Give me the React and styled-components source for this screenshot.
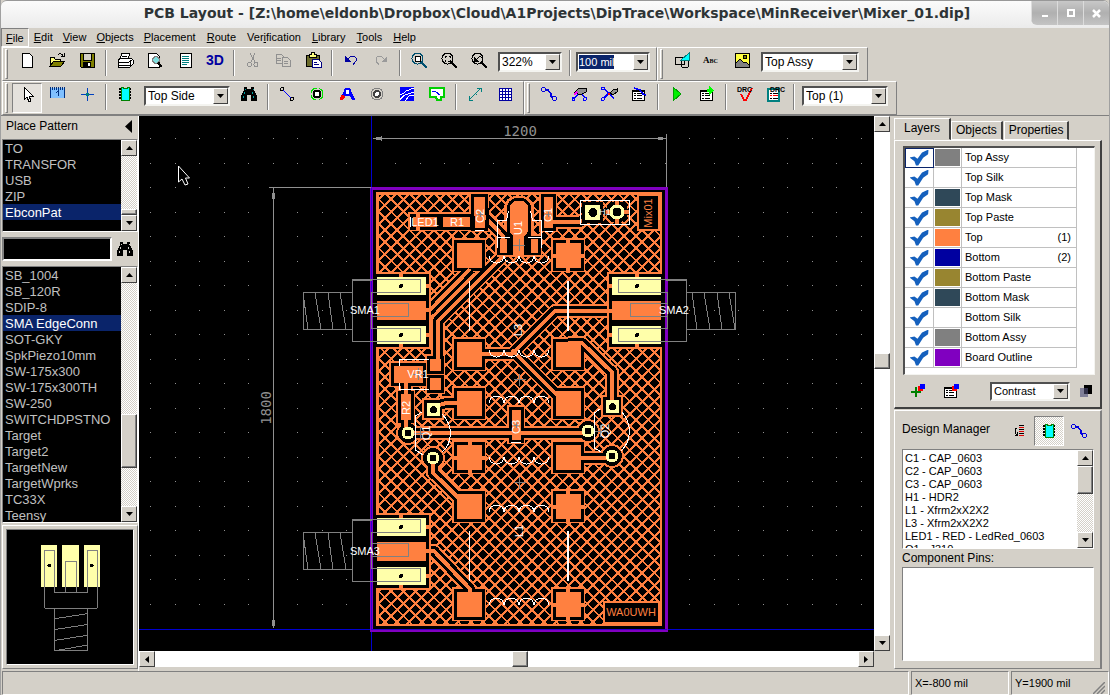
import React from "react";
import styled, { createGlobalStyle, css } from "styled-components";

const face = "#d4d0c8";
const copper = "#ff8040";
const pad = "#ffffaa";
const navy = "#0a246a";

const Global = createGlobalStyle`
  * { box-sizing: border-box; }
  body { margin: 0; background: ${face}; font: 11px/13px "Liberation Sans", Arial, sans-serif; color: #000; }
  button, input, select { font: inherit; color: inherit; margin: 0; padding: 0; border-radius: 0; }
  ul { list-style: none; margin: 0; padding: 0; }
`;

const raised = css`
  border: 1px solid; border-color: #fff #808080 #808080 #fff;
`;
const sunken = css`
  border: 1px solid; border-color: #808080 #fff #fff #808080;
`;

/* ---------- window frame ---------- */
const Window = styled.div`
  display: flex; flex-direction: column; height: 100vh; min-height: 600px;
  border-left: 1px solid #a0a0a0; border-right: 1px solid #a0a0a0; background: ${face};
`;
const TitleBar = styled.header`
  display: flex; height: 28px; flex: none; border-top: 1px solid #989898;
  border-radius: 6px 6px 0 0; background: linear-gradient(#fbfbfb, #ebebeb);
`;
const Title = styled.h1`
  flex: 1; margin: 0; padding-left: 82px; text-align: center; white-space: nowrap; overflow: hidden;
  font: bold 14px/25px "DejaVu Sans", sans-serif; color: #2e3436;
`;
const WindowButtons = styled.div`
  display: flex; height: 24px; border-radius: 0 6px 0 6px; overflow: hidden;
  background: linear-gradient(#c8c8c8, #b0b0b0 50%, #c4c4c4);
`;
const WindowButton = styled.button`
  width: 26px; border: 0; border-left: 1px solid #dcdcdc; background: none; display: grid; place-items: center;
`;
const MenuBar = styled.nav`
  display: flex; height: 19px; flex: none;
`;
const MenuItem = styled.button`
  height: 19px; padding: 0 4px; line-height: 17px; background: none;
  border: 1px solid ${face};
  &:nth-child(n + 5) { padding-right: 5px; }
  ${(p) => p.$open && css`border-color: #808080 #fff #fff #808080; line-height: 19px;`}
`;

/* ---------- tool bars ---------- */
const BarRow = styled.div`
  display: flex; height: 34px; flex: none; padding-left: 1px;
`;
const Band = styled.div`
  display: flex; ${raised} padding: 1px ${(p) => p.$end || 3}px 0 2px;
`;
const Grip = styled.span`
  width: 3px; height: 30px; ${raised} margin-right: 4px;
`;
const ToolButton = styled.button`
  width: 30px; height: 30px; padding: 2px 6px 10px; border: 1px solid transparent; background: none;
  ${(p) => p.$down && css`border-color: #808080 #fff #fff #808080; background: #e4e1dc;`}
  svg { display: block; }
`;
const Split = styled.span`
  width: 2px; height: 26px; margin: 1px 3px; flex: none; border-left: 1px solid #808080; border-right: 1px solid #fff;
`;
const ComboBox = styled.span`
  display: flex; width: ${(p) => p.$w}px; height: ${(p) => p.$h || 20}px; margin: ${(p) => p.$m || "3px 4px 0"};
  background: #fff; border: 2px solid; border-color: #505050 #f4f4f0 #f4f4f0 #505050;
  select, input { flex: 1; min-width: 0; border: 0; outline: 0; appearance: none; background: #fff; padding-left: 2px; font-size: ${(p) => p.$f || 12}px; }
`;
const Highlighted = styled.span`
  flex: 1; display: flex; padding: 1px;
  input { flex: none; width: 35px; padding: 0; background: ${navy}; color: #fff; }
`;
const DropArrow = styled.span`
  width: 15px; display: grid; place-items: center; background: ${face};
  border: 1px solid; border-color: #fff #404040 #404040 #fff;
`;

/* ---------- body ---------- */
const Body = styled.main`
  flex: 1; min-height: 0; display: flex; border-top: 1px solid #808080;
`;
const Left = styled.aside`
  width: 138px; flex: none; display: flex; flex-direction: column; border-right: 1px solid #fff; padding: 0 0 2px 1px;
`;
const PanelHead = styled.div`
  display: flex; align-items: center; justify-content: space-between; height: 23px; padding: 0 6px 3px 4px; font-size: 12px;
  button { border: 0; background: none; line-height: 0; }
`;
const ListFrame = styled.div`
  display: flex; ${sunken} background: ${(p) => (p.$dark ? "#000" : "#fff")};
  height: ${(p) => (p.$h ? p.$h + "px" : "auto")}; flex: ${(p) => (p.$h ? "none" : "1 1 0")}; min-height: 0;
`;
const PatternList = styled.ul`
  flex: 1; overflow: hidden; color: #c0c0c0; font-size: 13px; line-height: 16px;
`;
const Pattern = styled.li`
  height: 16px; padding: 1px 0 0 2px; white-space: nowrap;
  ${(p) => p.$on && css`background: ${navy}; color: #fff;`}
`;
const SearchRow = styled.div`
  display: flex; align-items: center; height: 34px; flex: none;
  input { width: 110px; height: 24px; background: #000; color: #fff; border: 2px solid; border-color: #808080 #fff #fff #808080; outline: 0; }
  button { flex: 1; border: 0; background: none; line-height: 0; }
`;
const Preview = styled.div`
  height: 144px; flex: none; margin-top: 2px; border: 1px solid #808080; border-left-color: #fff; border-top-color: #fff; padding: 3px;
  svg { display: block; width: 100%; height: 100%; background: #000; ${sunken} }
`;
const ScrollBar = styled.div`
  display: flex; flex: none; flex-direction: ${(p) => (p.$row ? "row" : "column")};
  ${(p) => (p.$row ? "height" : "width")}: 16px;
  background: ${(p) => (p.$plain ? "#fff" : `repeating-conic-gradient(#fff 0 25%, ${face} 0 50%) 0 0 / 2px 2px`)};
`;
const ScrollButton = styled.button`
  width: 16px; height: 16px; flex: none; background: ${face}; line-height: 0;
  border: 1px solid; border-color: #fff #404040 #404040 #fff; display: grid; place-items: center;
`;
const Thumb = styled.span`
  flex: 0 0 ${(p) => p.$size}px; background: ${face};
  border: 1px solid; border-color: #fff #404040 #404040 #fff; box-shadow: inset -1px -1px #808080;
`;
const Space = styled.span`
  flex: ${(p) => p.$part} 1 0;
`;
const CanvasArea = styled.section`
  flex: 1; min-width: 0; display: grid; grid-template: 1fr 17px / 1fr 19px; padding-bottom: 3px;
  > svg { display: block; width: 100%; height: 100%; background: #000; }
`;
const Right = styled.aside`
  width: 216px; flex: none; padding: 2px 7px 2px 1px; display: flex; flex-direction: column;
`;
const Tabs = styled.div`
  display: flex; align-items: flex-end; height: 22px; flex: none;
`;
const Tab = styled.button`
  height: ${(p) => (p.$on ? 22 : 19)}px; padding: 0 ${(p) => (p.$on ? 9 : 4)}px ${(p) => (p.$on ? 2 : 1)}px; font-size: 12px; background: ${face}; white-space: nowrap;
  border: 1px solid; border-color: #fff #404040 ${(p) => (p.$on ? face : "#fff")} #fff; border-right-width: 2px;
  margin-right: ${(p) => (p.$on ? 0 : 1)}px;
`;
const LayerPage = styled.section`
  height: 269px; flex: none; border: 1px solid; border-color: #fff #404040 #404040 #fff; border-width: 1px 2px 2px 1px;
  padding: 5px 5px 5px 8px; display: flex; flex-direction: column; justify-content: space-between;
`;
const LayerFrame = styled.div`
  height: 229px; background: #fff; border: 2px solid; border-color: #505050 #f4f4f0 #f4f4f0 #505050; border-width: 2px 1px 1px 2px;
`;
const LayerTable = styled.table`
  border-collapse: separate; border-spacing: 0; table-layout: fixed; width: 172px;
  td { height: 20px; padding: 0; border-right: 1px solid #c0c0c0; border-bottom: 1px solid #c0c0c0; vertical-align: middle; }
`;
const TickCell = styled.td`
  width: 29px; text-align: center; line-height: 0;
  ${(p) => p.$focus && css`outline: 1px solid ${navy}; outline-offset: -1px;`}
`;
const Tick = styled.input`
  appearance: none; width: 19px; height: 16px; vertical-align: middle; background: #1560bd;
  clip-path: polygon(0 50%, 26% 44%, 42% 58%, 66% 18%, 100% 0, 98% 30%, 72% 52%, 46% 100%, 34% 100%, 26% 74%);
`;
const SwatchCell = styled.td`
  width: 28px;
`;
const Swatch = styled.span`
  display: block; height: 17px; margin: 0 1px; background: ${(p) => p.$c};
`;
const NameCell = styled.td`
  div { display: flex; justify-content: space-between; padding: 0 5px 0 3px; }
`;
const LayerTools = styled.div`
  display: flex; align-items: center; height: 22px;
`;
const SmallTool = styled.button`
  width: ${(p) => p.$w}px; border: 0; background: none; line-height: 0; padding: 0; text-align: center;
`;
const Manager = styled.section`
  flex: 1; min-height: 0; margin-top: 1px; ${raised} border-right-width: 2px; padding: 4px 6px 7px 7px; display: flex; flex-direction: column;
`;
const ManagerHead = styled.div`
  display: flex; align-items: center; height: 34px; flex: none; padding-bottom: 2px;
  h2 { flex: 1; margin: 0; font: 12px/26px "Liberation Sans", Arial, sans-serif; height: 30px; white-space: nowrap; }
`;
const ModeButton = styled.button`
  width: 30px; height: 30px; border: 1px solid transparent; background: none; line-height: 0;
  ${(p) => p.$down && css`border-color: #808080 #fff #fff #808080; background: repeating-conic-gradient(#fff 0 25%, ${face} 0 50%) 0 0 / 2px 2px;`}
`;
const PartList = styled.ul`
  flex: 1; overflow: hidden; padding: 2px 2px 0; line-height: 13px; white-space: nowrap;
`;
const PinsTitle = styled.h3`
  font: 12px/18px "Liberation Sans", Arial, sans-serif; margin: 0; height: 18px; flex: none;
`;
const Status = styled.footer`
  display: flex; gap: 2px; height: 24px; flex: none; padding-left: 1px;
`;
const StatusCell = styled.div`
  ${sunken} padding: 0 3px; line-height: 22px; display: flex; justify-content: space-between; align-items: flex-end;
  flex: ${(p) => (p.$w ? `0 0 ${p.$w}px` : 1)};
`;

/* ---------- small drawings ---------- */
const arrows = {
  up: "M0 4L3.5 0L7 4z", down: "M0 0H7L3.5 4z", left: "M4 0V7L0 3.5z", right: "M0 0V7L4 3.5z",
};
const Arrow = ({ to }) => (
  <svg width={to === "left" || to === "right" ? 4 : 7} height={to === "left" || to === "right" ? 7 : 4}><path d={arrows[to]} /></svg>
);

const Binoc = ({ c = "#00a0a0" }) => (
  <g><path d="M3 1H6V3H10V1H13V4L16 10V15H10V9H6V15H0V10L3 4z" /><path d="M4 3v1M12 3v1M3 6v2M11 6v2M2 10v2M12 10v2" stroke={c} fill="none" /></g>
);
const Chip = () => (
  <g><path d="M2 3H14M2 6H14M2 9H14M2 12H14" stroke="#000" strokeWidth="2" /><path d="M4 1H6V2H10V1H12V14H4z" fill="#00ffff" stroke="#008000" /></g>
);
const ListSheet = () => (
  <g><path d="M1 4H13V14H1z" fill="#fff" stroke="#000" /><path d="M1 4.500H13" stroke="#000" strokeWidth="2" /><path d="M3 7h2M6 7h5M3 9h2M6 9h5M3 12h2M6 12h5" stroke="#000" /></g>
);
const Wire = () => (
  <g fill="none" stroke="#0000e0"><circle cx="2.500" cy="3.500" r="2" /><circle cx="13.500" cy="12.500" r="2" /><path d="M4 4H7L10 8V10L12 12" strokeWidth="1.500" /></g>
);
const Lens = ({ c = "#000" }) => <g fill="none" stroke={c}><circle cx="6.500" cy="6.500" r="5.500" /><path d="M11 11L16 16" strokeWidth="2" /></g>;

const icons = {
  new: <path d="M3 1H10L13 4V15H3z" fill="#fff" stroke="#000" />,
  open: <g stroke="#000"><path d="M1 14V5H5L6 7H11V9" fill="#ffff80" /><path d="M1 14L5 9H16L12 14z" fill="#808000" /><path d="M9 3Q12 0 14 4M15 1V4H12" fill="none" /></g>,
  save: <g><path d="M1 1H15V15H2L1 14z" fill="#808000" stroke="#000" /><path d="M4 1H12V8H4z" fill={face} stroke="#000" /><path d="M4 10H12V15H4z" /><path d="M9 11h2v3H9z" fill="#fff" /></g>,
  print: <g stroke="#000"><path d="M5 1H13L11 7H3z" fill="#fff" /><path d="M1 8L4 6H14L16 8V12L13 15H1z" fill="#fff" /><path d="M1 10H12L15 8M1 13H13M5 4H10M13 9V14" fill="none" /></g>,
  preview: <g><path d="M1 1H9L12 4V15H1z" fill="#fff" stroke="#000" /><circle cx="9" cy="8" r="3.500" fill="#80e0e0" stroke="#808080" strokeWidth="1.500" /><path d="M11 11L15 15" stroke="#000" strokeWidth="2.500" /></g>,
  titles: <g><path d="M3 1H14V15H3z" fill="#fff" stroke="#000" /><path d="M5 4.500H12M5 6.500H12M5 8.500H12M5 10.500H12M5 12.500H10" stroke="#008080" /></g>,
  cut: <g fill="none" stroke="#909090"><path d="M5 1L10 10M10 1L6 10" /><circle cx="4.500" cy="12.500" r="2" /><circle cx="11" cy="12.500" r="2" /></g>,
  copy: <g fill={face} stroke="#909090"><path d="M1 2H6L9 5V11H1z" /><path d="M7 5H12L15 8V14H7z" /><path d="M2 6h4M2 8h4M9 9h4M9 11h4" /></g>,
  paste: <g><path d="M1 3H14V14H1z" fill="#6b6b2b" stroke="#000" /><path d="M4 2H6V0H9V2H11V5H4z" fill="#ffff80" stroke="#000" /><path d="M7 7H13L16 10V15H7z" fill="#fff" stroke="#000080" /><path d="M9 10h3M9 12h5" stroke="#000080" /></g>,
  undo: <g><path d="M4 8L7 5Q11 3 13 6V9L10 13" fill="none" stroke="#0000a0" /><path d="M2 4V10H8z" fill="#0000a0" /></g>,
  redo: <g><path d="M12 8L9 5Q5 3 3 6V9L6 13" fill="none" stroke="#9a9a9a" /><path d="M14 4V10H8z" fill="#9a9a9a" /></g>,
  zoomBox: <g><Lens c="#005070" /><path d="M4.500 4.500H9.500V9.500H4.500z" fill="#fff" stroke="#000" /></g>,
  zoomAll: <g><Lens /><path d="M4 6V4H6M8 4H9V6M9 8V9H7M5 9H4V8" fill="none" stroke="#000" /></g>,
  zoomBack: <g><Lens /><path d="M3 5V10H8z" /><path d="M5 8L9 4L12 7" stroke="#000" fill="none" /></g>,
  shapes: <g fill="none" stroke="#000"><path d="M1 5H10V12H1z" /><circle cx="11" cy="12" r="4" /><path d="M7 8L15 1V8z" fill="#00ffff" stroke="#008080" /></g>,
  image: <g><path d="M1 1H15V15H1z" fill="#ffff40" stroke="#000" /><circle cx="11" cy="5" r="2" fill="#808000" stroke="#000" /><path d="M1 15V12L6 7L10 11L12 10L15 13V15z" fill="#808080" stroke="#000" /></g>,
  pointer: <path d="M5 1V14L8 11L10 16L12 15L10 10H14z" fill="#fff" stroke="#000" />,
  ruler: <g><path d="M1 2H15V12H1z" fill="#80c0ff" /><path d="M1 12V1M3 4V1M5 4V1M7 4V1M9 4V1M11 4V1M13 4V1M15 12V1M7 7L9 5V10" stroke="#003080" fill="none" /></g>,
  origin: <g stroke="#0040c0"><path d="M8.500 2V15M2 8.500H15" /><path d="M7 7h3v3H7z" fill="#008080" stroke="none" /></g>,
  chip: <Chip />,
  binoc: <Binoc />,
  trace: <g><path d="M3 3L13 13" stroke="#0000ff" /><circle cx="3" cy="3" r="1.500" fill={face} stroke="#000" /><circle cx="13" cy="13" r="1.500" fill={face} stroke="#000" /></g>,
  via: <g fill="none"><circle cx="8" cy="8" r="6" stroke="#00e000" strokeDasharray="7 3" /><circle cx="8" cy="8" r="3.500" fill="#fff" stroke="#000" strokeWidth="2" /></g>,
  arc: <g><path d="M2 14L7 5L10 5L15 14" fill="none" stroke="#0000ff" strokeWidth="3" /><path d="M1 14L2 9H5L6 11L4 14z" fill="#ff0000" /><circle cx="8.500" cy="6" r="3" fill="#fff" stroke="#0000ff" strokeWidth="2" /></g>,
  hole: <g fill="none"><circle cx="8" cy="8" r="6" stroke="#808080" /><circle cx="8" cy="8" r="3" fill="#fff" stroke="#404040" strokeWidth="2" /></g>,
  pour: <g><path d="M1 1H15V15H1z" fill="#0000ff" /><path d="M1 9Q5 8 7 5L15 2M1 14Q5 8 9 8L15 6M6 15L10 10L15 9" stroke="#fff" fill="none" /></g>,
  board: <g><path d="M1 2H15V11H12V14H8L7 11H1z" fill="#fff" stroke="#00d000" strokeWidth="2" /><path d="M3 5L7 6L11 9" stroke="#0000ff" fill="none" /></g>,
  measure: <path d="M2 14L14 2M10 2H14V6M2 10V14H6M8 7L10 9" fill="none" stroke="#008080" />,
  grid: <g><path d="M2 2H14V14H2z" fill="#fff" stroke="#0000a0" /><path d="M5 2V14M8 2V14M11 2V14M2 5H14M2 8H14M2 11H14" stroke="#0000a0" /></g>,
  route: <Wire />,
  edit: <g><path d="M3 13L7 8H11L14 12" fill="none" stroke="#0000ff" strokeWidth="1.500" /><circle cx="2.500" cy="13" r="1.500" fill="none" stroke="#0000ff" /><circle cx="14" cy="13" r="1.500" fill="none" stroke="#0000ff" /><path d="M3 7L8 2H15V6L11 8H7z" fill="#909090" stroke="#000" /><path d="M3 9L6 6" stroke="#ff00ff" strokeWidth="2" /></g>,
  unroute: <g><path d="M3 3L8 7L3 12M8 8L13 12" fill="none" stroke="#0000ff" strokeWidth="1.500" /><circle cx="2" cy="2.500" r="1.500" fill="none" stroke="#0000ff" /><circle cx="2" cy="13" r="1.500" fill="none" stroke="#0000ff" /><path d="M9 7L12 4L16 3V6L12 9z" fill="#909090" stroke="#000" /><circle cx="8" cy="8" r="1.500" fill="#ff0000" /></g>,
  netList: <g><ListSheet /><path d="M3 2L9 4L12 8L15 9" stroke="#0000ff" fill="none" strokeWidth="1.500" /></g>,
  run: <path d="M4 1L12 8L4 15z" fill="#00f000" stroke="#00a000" />,
  runSetup: <g><ListSheet /><path d="M10 0L15 5L10 9V6H8V3H10z" fill="#00ff00" /></g>,
  check: <path d="M4 8L7 14L9 14L15 2" fill="none" stroke="#ff0000" strokeWidth="2" />,
  checkList: <g><path d="M1 3H12V15H1z" fill="#fff" stroke="#008080" strokeWidth="2" /><path d="M3 7h2M6 7h5M3 12h2M6 12h5" stroke="#000" /><path d="M3 9.500h2M6 9.500h5" stroke="#ff0000" /></g>,
  addLayer: <g><path d="M1 9H11M6 4V14" stroke="#008000" strokeWidth="2" /><path d="M8 3h5v5H8z" fill="#ff0000" /><path d="M10 1h5v5h-5z" fill="#0000ff" /></g>,
  layerSetup: <g><ListSheet /><path d="M9 3h5v5H9z" fill="#ff0000" /><path d="M11 1h5v5h-5z" fill="#0000ff" /></g>,
  sort: <g fill="none" stroke="#000"><path d="M8 2.500h5M8 6.500h5M8 10.500h5" /><path d="M8 4.500h5M8 8.500h5M8 12.500h5" stroke="#e00000" /><path d="M6 5L4 6V10L6 12M4 12H6V9" /></g>,
  contrast: <g><path d="M7 2h8v9H7z" /><path d="M3 5h8v9H3z" fill="#808098" /><path d="M7 5h4v6H7z" fill="#303048" /></g>,
};
const IconText = styled.text`
  font: bold ${(p) => p.$s}px ${(p) => p.$family || '"Liberation Sans"'}, sans-serif; fill: ${(p) => p.$c || "#000"};
  font-variant: ${(p) => (p.$small ? "small-caps" : "normal")};
`;
const Icon = ({ name }) => (
  <svg width="16" height="16" viewBox="0 0 16 16" shapeRendering="crispEdges" overflow="visible" fill="#000">
    {icons[name]}
    {name === "check" && <IconText x="0" y="6" $s={7}>DRC</IconText>}
    {name === "checkList" && <IconText x="3" y="6" $s={7}>DRC</IconText>}
    {name === "3D" && <IconText x="-1" y="13" $s={14} $c="#0000a0">3D</IconText>}
    {name === "ABC" && <IconText x="-1" y="11" $s={9} $small $family='"Liberation Serif"'>Abc</IconText>}
  </svg>
);
const Tool = ({ name, down }) => <ToolButton $down={down} aria-label={name}><Icon name={name} /></ToolButton>;
const Tools = ({ names }) => names.split(" ").map((n, i) => (n === "|" ? <Split key={i} /> : <Tool key={i} name={n} />));
const Combo = ({ w, label, value, h, m, f }) => (
  <ComboBox $w={w} $h={h} $m={m} $f={f}>
    <select aria-label={label} defaultValue={value}><option>{value}</option></select>
    <DropArrow><Arrow to="down" /></DropArrow>
  </ComboBox>
);
const Scroll = ({ row, plain, before, size, after }) => (
  <ScrollBar $row={row} $plain={plain}>
    <ScrollButton aria-label="Back"><Arrow to={row ? "left" : "up"} /></ScrollButton>
    <Space $part={before} /><Thumb $size={size} /><Space $part={after} />
    <ScrollButton aria-label="Forward"><Arrow to={row ? "right" : "down"} /></ScrollButton>
  </ScrollBar>
);

/* ---------- circuit board ---------- */
const hatch = (() => {
  const step = 12.25, top = 193, bottom = 625;
  let d = "";
  for (let c = 590.4 - 3 * step; c < 662 + bottom; c += step) d += `M${c - top} ${top}L${c - bottom} ${bottom}`;
  for (let c = 191.8 - 36 * step; c < 662 - top; c += step) d += `M${c + top} ${top}L${c + bottom} ${bottom}`;
  return d;
})();
const gridDots = (() => {
  let d = "";
  for (let i = 0; i < 90; i++) for (let j = 0; j < 20; j++) d += `M${Math.round(150.4 + i * 24.5)} ${Math.round(138.4 + j * 24.5)}h1v1h-1z`;
  return d;
})();
const traces = [
  "M424 310H430L470 269", "M503 256L438 321V365", "M616 311H555L512 354H470", "M512 350L566 404",
  "M568 343H582L612 372V406", "M568 458H607L612 456", "M408 433H588", "M433 407L446 403H470",
  "M433 458V473L468 507", "M424 551H434L470 589V600", "M406 380V433", "M548 222H580L592 214", "M484 216L503 236V246",
];
const rows = [256, 354.5, 404, 458, 507, 605];
const thermal = [[568, 256], [470, 458], [568, 507], [568, 605]];
const rects = [
  ...rows.flatMap((y) => [[457, y - 13, 25, 25], [556, y - 13, 25, 25]]),
  [394, 366, 29, 17], [430, 359, 11, 12], [430, 378, 11, 12], [401, 394, 10, 26],
  [512, 410, 9, 30], [474, 197, 11, 31], [544, 197, 9, 31], [413, 217, 61, 10], [500, 239, 7, 14], [531, 239, 7, 14],
];
const rings = [[408, 433], [433, 458], [588, 431], [612, 456]];
const squares = [[433, 409], [612, 406]];
const coils = [[256, 0], [350, 0], [403, 1], [457, 0], [512, 1], [605, 1]];

const BoardLabel = styled.text`
  font: ${(p) => p.$s || 11}px "Liberation Sans", Arial, sans-serif; fill: ${(p) => p.$c || "#fff"}; text-anchor: middle;
`;
const DimensionLabel = styled.text`
  font: 14px "DejaVu Sans Mono", monospace; fill: #909090; text-anchor: middle;
`;
const Side = ({ x, y, children, c }) => (
  <BoardLabel transform={`translate(${x} ${y}) rotate(-90)`} $c={c}>{children}</BoardLabel>
);

const Edge = ({ y, flip }) => (
  <g transform={flip ? `translate(1038 ${y}) scale(-1 1)` : `translate(0 ${y})`}>
    <path d="M376 -38.500H431V39H376z" fill={copper} />
    <path d="M373 -36.500H429V37H373z" />
    <path d="M399 -37h4v4h-4zM399 34h4v5h-4zM425 -26h5v4h-5zM425 23h5v4h-5zM377 -9H426V10H377z" fill={copper} />
    <path d="M377 -33H426V-15H377zM377 16H426V34H377z" fill={pad} />
    <circle cx="401" cy="-24" r="2" /><circle cx="401" cy="25" r="2" />
  </g>
);
const EdgeBody = ({ y, flip }) => (
  <g fill="none" stroke="#808080">
    <g transform={flip ? `translate(1038 ${y}) scale(-1 1)` : `translate(0 ${y})`}>
      <path d="M371 -30.500H352V31.500H371M371 -30.500H420V-17.500H371V18.500H420V31.500H371M371 -6.500H408V6.500H371M352 -17.500H303V19H352" />
      <path d="M352 -30H372" strokeWidth="2" />
    </g>
    <path transform={`translate(${flip ? 389 : 0} ${y})`} d="M303 -17L308 19M315 -17L321 19M328 -17L333 19M340 -17L346 19" />
  </g>
);
const Plus = ({ x, y, r = 6 }) => <path d={`M${x - r} ${y}H${x + r}M${x} ${y - r}V${y + r}`} stroke="#808080" />;

const Board = () => (
  <svg shapeRendering="crispEdges" role="img" aria-label="Board">
    <defs>
      <clipPath id="pour"><rect x="376" y="192" width="286" height="434" /></clipPath>
    </defs>
    <g transform="translate(-139 -116)">
      <path d={gridDots} fill="#909090" />
      <path d="M371.500 189H666V630H371.500z" fill="#000" />
      <path d="M371.500 116V2000M139 629.500H2600" stroke="#0000d0" />
      <path d="M371.500 188H666V630H371.500z" fill="none" stroke="#8000c0" strokeWidth="3" />
      <path d="M371.500 188V630M371 629.500H667" stroke="#3000d0" />
      <g clipPath="url(#pour)">
        <path d={hatch} stroke={copper} strokeWidth="2" fill="none" />
        <rect x="377" y="193" width="284" height="432" fill="none" stroke={copper} strokeWidth="3" />
      </g>
      <g fill="none" stroke={copper} strokeWidth="14" strokeLinejoin="round">{traces.map((d) => <path key={d} d={d} />)}</g>
      <g fill={copper}>
        {rects.map(([x, y, w, h], i) => <rect key={i} x={x - 5} y={y - 5} width={w + 9} height={h + 9} />)}
        {rings.map(([x, y]) => <circle key={x} cx={x} cy={y} r="12" />)}
        {squares.map(([x, y]) => <rect key={x} x={x - 11} y={y - 11} width="22" height="22" />)}
        <rect x="504" y="196" width="30" height="60" rx="12" />
      </g>
      <g fill="none" stroke="#000" strokeWidth="10" strokeLinejoin="round">{traces.map((d) => <path key={d} d={d} />)}</g>
      {rects.map(([x, y, w, h], i) => <rect key={i} x={x - 3} y={y - 3} width={w + 6} height={h + 6} />)}
      {rings.map(([x, y]) => <circle key={x} cx={x} cy={y} r="10" />)}
      {squares.map(([x, y]) => <rect key={x} x={x - 9} y={y - 9} width="18" height="18" />)}
      <rect x="507" y="198" width="24" height="46" rx="10" />
      <rect x="497" y="237" width="44" height="18" />
      <Edge y={310} /><Edge y={551} /><Edge y={310} flip />
      <g fill="none" stroke={copper} strokeWidth="4">{traces.map((d) => <path key={d} d={d} />)}</g>
      <g fill={copper}>
        {rects.map(([x, y, w, h], i) => <rect key={i} x={x} y={y} width={w} height={h} />)}
        {thermal.map(([x, y], i) => <path key={i} d={`M${x - 17} ${y - 2}h34v4h-34zM${x - 2} ${y - 17}h4v34h-4z`} />)}
        <rect x="510" y="201" width="18" height="36" rx="7" />
        <rect x="513" y="232" width="11" height="24" />
        <rect x="497" y="255" width="44" height="2" />
        <rect x="416" y="212" width="4" height="19" />
      </g>
      <path d="M437 216h6v12h-6zM470 216h5v12h-5zM486 208h3v16h-3z" />

      <path d="M582 202H603V223H582z" /><circle cx="617" cy="212" r="11" />
      <path d="M615 200h4v24h-4zM606 210h23v4h-23z" fill={copper} />
      <path d="M585 205h15v15h-15z" fill={pad} /><circle cx="593" cy="212.500" r="4.500" />
      <circle cx="617" cy="212" r="6" fill="#000" stroke={pad} strokeWidth="3" />
      {rings.map(([x, y]) => <circle key={x} cx={x} cy={y} r="5" stroke={pad} strokeWidth="3" />)}
      {squares.map(([x, y]) => <g key={x}><rect x={x - 6} y={y - 6} width="13" height="13" fill={pad} /><circle cx={x + 0.5} cy={y + 0.5} r="3.500" /></g>)}

      <rect x="638" y="195" width="21" height="35" stroke={copper} strokeWidth="2" />
      <Side x={652} y={213} c={copper}>Mix01</Side>
      <rect x="604" y="602" width="55" height="21" stroke={copper} strokeWidth="2" />
      <BoardLabel x="631" y="616" $c={copper}>WA0UWH</BoardLabel>

      <EdgeBody y={310} /><EdgeBody y={550} /><EdgeBody y={310} flip />
      <Plus x={519} y={245} /><Plus x={519.5} y={379.5} /><Plus x={519.5} y={482.5} /><Plus x={600} y={431} /><Plus x={420} y={433} />
      <Plus x={516} y={425} r={3} /><Plus x={480} y={214} r={3} /><Plus x={548} y={214} r={3} /><Plus x={418} y={374} />
      <g fill="none" stroke="#fff">
        {coils.map(([y, up]) => (
          <path key={y} d={`M489 ${y}` + (up ? "a7.5 7 0 0 1 15 0" : "a7.5 7 0 0 0 15 0").repeat(4)} />
        ))}
        <path d="M469.500 281V331M469.500 531V581" /><path d="M568 281V331M568 531V581" strokeWidth="2" />
        <path d="M508.500 211L506.500 220.500H497.500V248M530.500 211L532.500 220.500H541.500V248M497 237.500H510M528 237.500H541" />
        <path d="M580.500 200.500H629.500V224.500H580.500zM410.500 217V227M475 230.500H484M545 231.500H553M511 442.500H521" />
        <path d="M429 359H399.500V366M399.500 383V389.500H429" />
        <path d="M422 412L415.500 416V450L423 455M442 414Q450 422 450.500 433Q450 446 442 452" />
        <path d="M600 409L594.500 413V448L601 452M622 412Q629 420 629.500 431Q629 444 621 451" />
      </g>
      <BoardLabel x="365" y="314">SMA1</BoardLabel><BoardLabel x="674" y="314">SMA2</BoardLabel><BoardLabel x="365" y="555">SMA3</BoardLabel>
      <BoardLabel x="425" y="226">LED1</BoardLabel><BoardLabel x="457" y="226">R1</BoardLabel><BoardLabel x="418" y="378">VR1</BoardLabel><BoardLabel x="605" y="215" $s={9}>H1</BoardLabel>
      <Side x={484} y={216}>C2</Side><Side x={552} y={215}>C1</Side><Side x={522} y={228}>U1</Side><Side x={410} y={408}>R2</Side>
      <Side x={430} y={433}>Q1</Side><Side x={609} y={431}>Q2</Side><Side x={520} y={427}>C3</Side><Side x={522} y={330}>L3</Side><Side x={523} y={531}>L1</Side>

      <g stroke="#909090" fill="#909090">
        <path d="M373 138.500H665M666.500 134V187M273.500 187V628M269 187.500H371" />
        <path d="M374 138.500L381 137V140zM665 138.500L658 137V140zM272.500 193h2v5h-2zM272.500 620h2v5h-2z" />
      </g>
      <DimensionLabel x="520" y="136">1200</DimensionLabel>
      <DimensionLabel transform="translate(271 408) rotate(-90)">1800</DimensionLabel>
      <path d="M178.500 166V182L182 179L185 185L188 184L185.500 178H189.500z" fill="#000" stroke="#fff" shapeRendering="auto" />
    </g>
  </svg>
);

const PatternPreview = () => (
  <svg viewBox="6 528 128 136" shapeRendering="crispEdges">
    <path d="M41 543H57V586H41zM62 543H79V586H62zM84 543H100V586H84z" fill={pad} />
    <path d="M44.500 607.500V548.500H54.500V591.500H87.500V548.500H97.500V607.500zM65.500 591V559.500H76.500V591M54.500 607V650.500H87.500V607M55 618L87 613M55 629L87 624M55 640L87 635M58 650L87 645" fill="none" stroke="#808080" />
    <circle cx="49" cy="564" r="2" /><circle cx="92" cy="564" r="2" />
  </svg>
);

const groups = ["TO", "TRANSFOR", "USB", "ZIP", "EbconPat"];
const patterns = ["SB_1004", "SB_120R", "SDIP-8", "SMA EdgeConn", "SOT-GKY", "SpkPiezo10mm", "SW-175x300", "SW-175x300TH", "SW-250",
  "SWITCHDPSTNO", "Target", "Target2", "TargetNew", "TargetWprks", "TC33X", "Teensy"];
const layers = [
  ["Top Assy", "#808080"], ["Top Silk", "#ffffff"], ["Top Mask", "#2f4858"], ["Top Paste", "#988530"], ["Top", copper, "(1)"],
  ["Bottom", "#0000a0", "(2)"], ["Bottom Paste", "#988530"], ["Bottom Mask", "#2f4858"], ["Bottom Silk", "#ffffff"],
  ["Bottom Assy", "#808080"], ["Board Outline", "#8000c0"],
];
const parts = ["C1 - CAP_0603", "C2 - CAP_0603", "C3 - CAP_0603", "H1 - HDR2", "L1 - Xfrm2xX2X2", "L3 - Xfrm2xX2X2", "LED1 - RED - LedRed_0603", "Q1 - J310"];
const menu = ["File", "Edit", "View", "Objects", "Placement", "Route", "Ver|ification", "Library", "Tools", "Help"];

const MenuLabel = ({ text }) => {
  const at = text.indexOf("|");
  const t = text.replace("|", "");
  const i = at < 0 ? 0 : at;
  return <>{t.slice(0, i)}<u>{t[i]}</u>{t.slice(i + 1)}</>;
};

export default function App() {
  return (
    <Window>
      <Global />
      <TitleBar>
        <Title>{"PCB Layout - [Z:\\home\\eldonb\\Dropbox\\Cloud\\A1Projects\\DipTrace\\Workspace\\MinReceiver\\Mixer_01.dip]"}</Title>
        <WindowButtons>
          <WindowButton aria-label="Minimize"><svg width="8" height="8"><path d="M1 7H7" stroke="#fff" strokeWidth="2" /></svg></WindowButton>
          <WindowButton aria-label="Maximize"><svg width="8" height="8"><path d="M1 1H7V7H1z" stroke="#fff" strokeWidth="2" fill="none" /></svg></WindowButton>
          <WindowButton aria-label="Close"><svg width="9" height="9"><path d="M1 1L8 8M8 1L1 8" stroke="#fff" strokeWidth="2.500" /></svg></WindowButton>
        </WindowButtons>
      </TitleBar>
      <MenuBar>
        {menu.map((m, i) => <MenuItem key={m} $open={i === 0}><MenuLabel text={m} /></MenuItem>)}
      </MenuBar>

      <BarRow>
        <Band>
          <Grip />
          <Tools names="new open save | print preview titles 3D | cut copy paste | undo redo | zoomBox zoomAll zoomBack" />
          <Combo w={64} label="Zoom" value="322%" />
          <Split />
          <ComboBox $w={74} $m="3px 3px 0 2px" $f={11}>
            <Highlighted><input aria-label="Grid" defaultValue="100 mil" /></Highlighted>
            <DropArrow><Arrow to="down" /></DropArrow>
          </ComboBox>
        </Band>
        <Band $end={4}>
          <Grip />
          <Tools names="shapes ABC image" />
          <Combo w={98} label="Drawing layer" value="Top Assy" />
        </Band>
      </BarRow>
      <BarRow>
        <Band>
          <Grip />
          <Tool name="pointer" down />
          <Tools names="ruler origin | chip" />
          <Combo w={86} label="Side" value="Top Side" />
          <Tools names="binoc | trace via arc hole pour board | measure grid" />
        </Band>
        <Band $end={4}>
          <Grip />
          <Tools names="route edit unroute netList | run runSetup | check checkList |" />
          <Combo w={86} label="Layer" value="Top (1)" />
        </Band>
      </BarRow>

      <Body>
        <Left>
          <PanelHead>Place Pattern<button aria-label="Hide"><svg width="7" height="13"><path d="M7 0V13L0 6.500z" /></svg></button></PanelHead>
          <ListFrame $dark $h={93}>
            <PatternList>{groups.map((g, i) => <Pattern key={g} $on={i === 4}>{g}</Pattern>)}</PatternList>
            <Scroll before={1} size={6} after={0} />
          </ListFrame>
          <SearchRow>
            <input aria-label="Search" />
            <button aria-label="Find"><svg width="16" height="16" shapeRendering="crispEdges"><Binoc c="#d4d0c8" /></svg></button>
          </SearchRow>
          <ListFrame $dark>
            <PatternList>{patterns.map((g, i) => <Pattern key={g} $on={i === 3}>{g}</Pattern>)}</PatternList>
            <Scroll before={131} size={54} after={38} />
          </ListFrame>
          <Preview><PatternPreview /></Preview>
        </Left>

        <CanvasArea>
          <Board />
          <Scroll plain before={221} size={16} after={267} />
          <Scroll plain row before={357} size={16} after={330} />
        </CanvasArea>

        <Right>
          <Tabs><Tab $on>Layers</Tab><Tab>Objects</Tab><Tab>Properties</Tab></Tabs>
          <LayerPage>
            <LayerFrame>
              <LayerTable>
                <tbody>
                  {layers.map(([name, color, n], i) => (
                    <tr key={name}>
                      <TickCell $focus={i === 0}><Tick type="checkbox" defaultChecked id={`layer${i}`} /></TickCell>
                      <SwatchCell><Swatch $c={color} /></SwatchCell>
                      <NameCell><div><label htmlFor={`layer${i}`}>{name}</label><span>{n}</span></div></NameCell>
                    </tr>
                  ))}
                </tbody>
              </LayerTable>
            </LayerFrame>
            <LayerTools>
              <SmallTool $w={30} aria-label="Add layer"><Icon name="addLayer" /></SmallTool>
              <SmallTool $w={36} aria-label="Layer setup"><Icon name="layerSetup" /></SmallTool>
              <Combo w={80} h={19} m="0 5px 0 21px" f={11} label="View mode" value="Contrast" />
              <SmallTool $w={20} aria-label="Contrast"><Icon name="contrast" /></SmallTool>
            </LayerTools>
          </LayerPage>
          <Manager>
            <ManagerHead>
              <h2>Design Manager</h2>
              <ModeButton aria-label="Sort"><Icon name="sort" /></ModeButton>
              <ModeButton $down aria-label="Components"><Icon name="chip" /></ModeButton>
              <ModeButton aria-label="Nets"><Icon name="route" /></ModeButton>
            </ManagerHead>
            <ListFrame $h={100}>
              <PartList>{parts.map((p) => <li key={p}>{p}</li>)}</PartList>
              <Scroll before={0} size={28} after={37} />
            </ListFrame>
            <PinsTitle>Component Pins:</PinsTitle>
            <ListFrame />
          </Manager>
        </Right>
      </Body>
      <Status>
        <StatusCell />
        <StatusCell $w={98}>X=-800 mil</StatusCell>
        <StatusCell $w={98}>Y=1900 mil<svg width="12" height="12"><path d="M0 12L12 0M4 12L12 4M8 12L12 8" stroke="#808080" strokeWidth="1.500" /></svg></StatusCell>
      </Status>
    </Window>
  );
}
